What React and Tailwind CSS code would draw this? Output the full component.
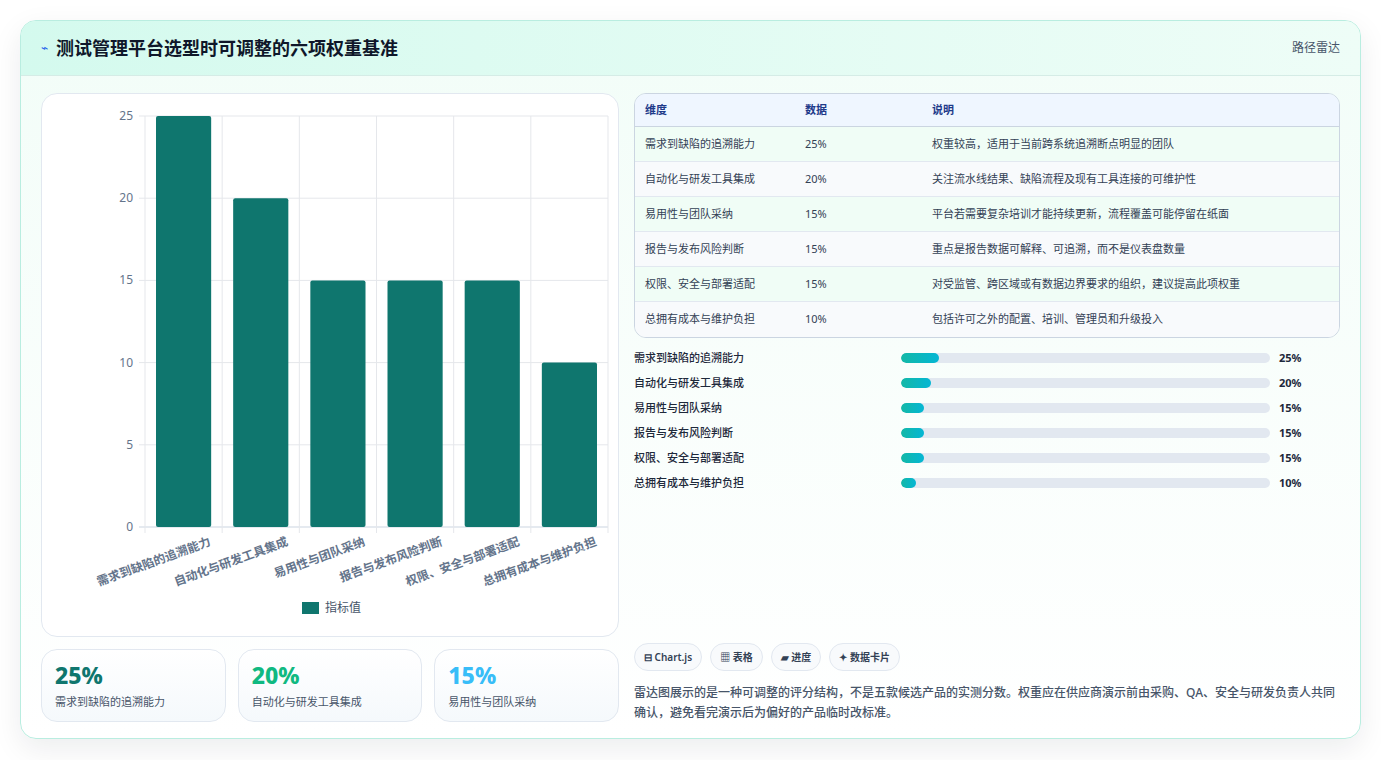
import React from 'react';

const rows = [
  { name: '需求到缺陷的追溯能力', value: 25, note: '权重较高，适用于当前跨系统追溯断点明显的团队' },
  { name: '自动化与研发工具集成', value: 20, note: '关注流水线结果、缺陷流程及现有工具连接的可维护性' },
  { name: '易用性与团队采纳', value: 15, note: '平台若需要复杂培训才能持续更新，流程覆盖可能停留在纸面' },
  { name: '报告与发布风险判断', value: 15, note: '重点是报告数据可解释、可追溯，而不是仪表盘数量' },
  { name: '权限、安全与部署适配', value: 15, note: '对受监管、跨区域或有数据边界要求的组织，建议提高此项权重' },
  { name: '总拥有成本与维护负担', value: 10, note: '包括许可之外的配置、培训、管理员和升级投入' },
];

const font = { fontFamily: '"Noto Sans", "Noto Sans CJK SC", sans-serif' };

const Chart = () => {
  const x0 = 103, x1 = 566, yTop = 22, yBot = 433;
  const cw = (x1 - x0) / 6;
  const y = (v) => yBot - (v / 25) * (yBot - yTop);
  return (
    <svg width="578" height="543" className="block">
      {[0, 5, 10, 15, 20, 25].map((t) => (
        <g key={t}>
          <line x1={x0 - 6} x2={x1} y1={y(t)} y2={y(t)} stroke={t === 0 ? '#cbd5e1' : '#e5e7eb'} />
          <text x={x0 - 12} y={y(t) + 4} textAnchor="end" fontSize="12" fill="#64748b">{t}</text>
        </g>
      ))}
      {[0, 1, 2, 3, 4, 5, 6].map((i) => (
        <line key={i} x1={x0 + i * cw} x2={x0 + i * cw} y1={yTop} y2={yBot + 6} stroke="#e5e7eb" />
      ))}
      {rows.map((r, i) => (
        <g key={r.name}>
          <rect x={x0 + i * cw + 11} y={y(r.value)} width={cw - 22} height={yBot - y(r.value)} rx="2" fill="#0f766e" />
          <text
            x={x0 + i * cw + cw / 2 + 28}
            y={yBot + 18}
            textAnchor="end"
            fontSize="12"
            fontWeight="600"
            fill="#64748b"
            transform={`rotate(-20 ${x0 + i * cw + cw / 2 + 28} ${yBot + 18})`}
          >
            {r.name}
          </text>
        </g>
      ))}
      <rect x="260" y="508" width="17" height="12" fill="#0f766e" />
      <text x="283" y="518" fontSize="12" fill="#475569">指标值</text>
    </svg>
  );
};

export default function App() {
  const stats = [
    { v: '25%', l: '需求到缺陷的追溯能力', c: 'text-[#0f766e]' },
    { v: '20%', l: '自动化与研发工具集成', c: 'text-[#10b981]' },
    { v: '15%', l: '易用性与团队采纳', c: 'text-[#38bdf8]' },
  ];
  return (
    <div className="w-[1381px] h-[760px] bg-white pt-5 px-5" style={font}>
      <div className="h-[719px] rounded-2xl border border-[#b9ede0] overflow-hidden shadow-[0_10px_30px_rgba(15,23,42,0.08)] bg-gradient-to-b from-[#f2fdf8] to-white">
        <div className="h-[55px] flex items-center justify-between px-5 bg-gradient-to-r from-[#d4faee] to-[#eefdf7] border-b border-[#d5ece6]">
          <div className="flex items-center gap-2">
            <span className="text-[#2563eb] text-xs">⌁</span>
            <h1 className="text-[18px] font-bold text-[#0f172a]">测试管理平台选型时可调整的六项权重基准</h1>
          </div>
          <span className="text-[12px] text-[#475569]">路径雷达</span>
        </div>
        <div className="flex gap-[15px] px-5 pt-[17px]">
          <div className="w-[578px] flex flex-col gap-3">
            <div className="h-[544px] rounded-2xl border border-[#e2e8f0] bg-white">
              <Chart />
            </div>
            <div className="grid grid-cols-3 gap-3">
              {stats.map((s) => (
                <div key={s.v} className="h-[73px] rounded-2xl border border-[#e2e8f0] bg-gradient-to-b from-white to-[#f5f9fc] px-[13px] pt-[10px]">
                  <div className={`text-[23px] font-extrabold leading-[30px] ${s.c}`}>{s.v}</div>
                  <div className="text-[11px] text-[#475569] mt-1">{s.l}</div>
                </div>
              ))}
            </div>
          </div>
          <div className="w-[708px] flex flex-col">
            <div className="rounded-xl border border-[#cbd5e1] overflow-hidden">
              <div className="flex h-[33px] items-center bg-[#eff6ff] border-b border-[#cbd5e1] text-[11px] font-semibold text-[#1e3a8a]">
                <div className="w-[170px] pl-[10px]">维度</div>
                <div className="w-[127px]">数据</div>
                <div>说明</div>
              </div>
              {rows.map((r, i) => (
                <div key={r.name} className={`flex h-[35px] items-center text-[11px] text-[#334155] ${i < 5 ? 'border-b border-[#e2e8f0]' : ''} ${i % 2 === 0 ? 'bg-[#f0fdf6]' : 'bg-[#f8fafc]'}`}>
                  <div className="w-[170px] pl-[10px]">{r.name}</div>
                  <div className="w-[127px]">{r.value}%</div>
                  <div>{r.note}</div>
                </div>
              ))}
            </div>
            <div className="flex flex-col gap-[9px] mt-[12px]">
              {rows.map((r) => (
                <div key={r.name} className="flex items-center h-[16px] text-[11px]">
                  <div className="w-[267px] text-[#1e293b] font-medium">{r.name}</div>
                  <div className="w-[369px] h-[10px] rounded-full bg-[#e2e8f0] overflow-hidden">
                    <div className="h-full rounded-full bg-gradient-to-r from-[#14b8a6] to-[#06b6d4]" style={{ width: `${r.value * 1.52}px` }} />
                  </div>
                  <div className="ml-[9px] font-bold text-[#1e293b]">{r.value}%</div>
                </div>
              ))}
            </div>
            <div className="mt-[152px] flex gap-2">
              {['⊟ Chart.js', '▦ 表格', '▰ 进度', '✦ 数据卡片'].map((b) => (
                <span key={b} className="h-[28px] px-[9px] flex items-center rounded-full border border-[#e2e8f0] bg-[#f8fafc] text-[10px] font-semibold text-[#334155]">{b}</span>
              ))}
            </div>
            <p className="mt-[12px] text-[12px] leading-[20px] text-[#475569] font-medium">
              雷达图展示的是一种可调整的评分结构，不是五款候选产品的实测分数。权重应在供应商演示前由采购、QA、安全与研发负责人共同确认，避免看完演示后为偏好的产品临时改标准。
            </p>
          </div>
        </div>
      </div>
    </div>
  );
}
